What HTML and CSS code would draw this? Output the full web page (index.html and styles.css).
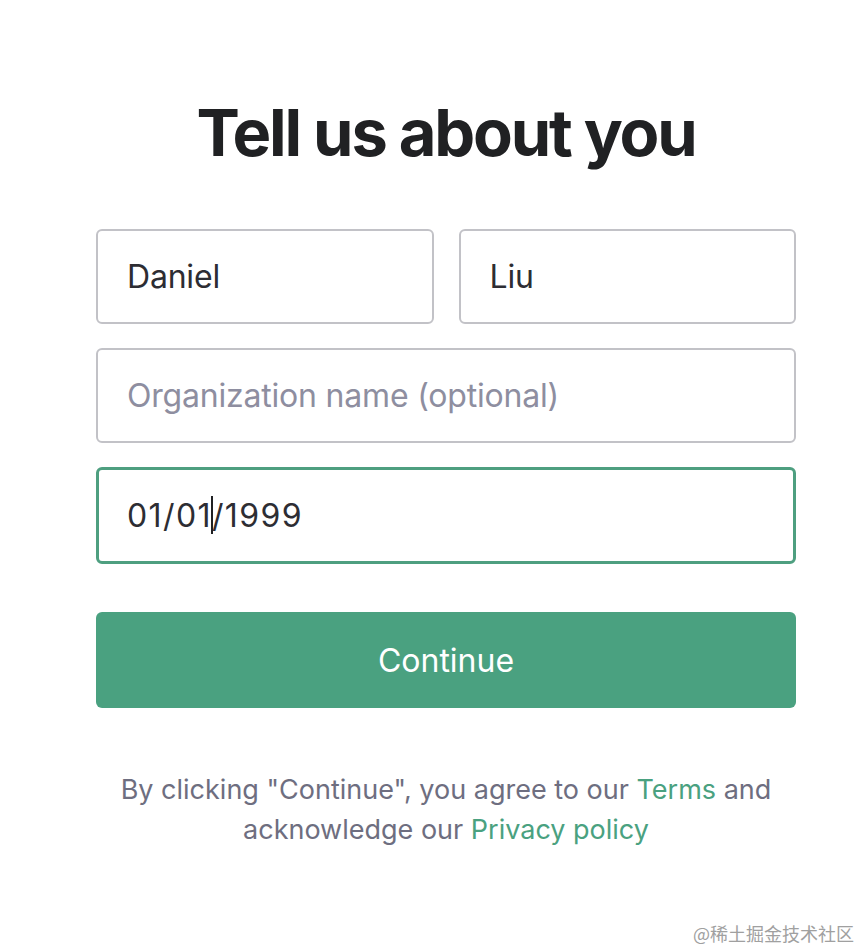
FILE: index.html
```html
<!DOCTYPE html>
<html>
<head>
<meta charset="utf-8">
<link rel="stylesheet" href="styles.css">
</head>
<body>
<main class="page">
  <h1 class="title">Tell us about you</h1>
  <form class="form">
    <div class="row">
      <div class="field"><span class="value">Daniel</span></div>
      <div class="field"><span class="value">Liu</span></div>
    </div>
    <div class="field"><span class="placeholder">Organization name (optional)</span></div>
    <div class="field focused"><span class="value date">01/01<span class="caret"></span>/1999</span></div>
    <div class="button">Continue</div>
  </form>
  <p class="legal">By clicking "Continue", you agree to our <a class="link">Terms</a> and acknowledge our <a class="link">Privacy policy</a></p>
</main>
<div class="watermark">@稀土掘金技术社区</div>
</body>
</html>
```
FILE: styles.css
```css
html, body {
  margin: 0;
  padding: 0;
  background: #ffffff;
}
body {
  width: 862px;
  height: 952px;
  position: relative;
  overflow: hidden;
  font-family: Inter, "Noto Sans", sans-serif;
}
.page {
  margin-left: 96px;
  width: 700px;
  padding-top: 91px;
}
.title {
  margin: 0;
  text-align: center;
  font-size: 65px;
  font-weight: 700;
  color: #202123;
  line-height: 82px;
  letter-spacing: -2.2px;
  position: relative;
  top: 1px;
}
.form {
  margin-top: 56px;
  display: flex;
  flex-direction: column;
  gap: 24px;
}
.row {
  display: flex;
  gap: 25px;
}
.row .field {
  flex: 1;
}
.field {
  box-sizing: border-box;
  height: 95px;
  border: 2px solid #c2c2c7;
  border-radius: 6px;
  padding-left: 29px;
  display: flex;
  align-items: center;
  font-size: 32px;
  letter-spacing: -0.2px;
}
.value {
  color: #2d2d33;
}
.date {
  letter-spacing: 1.4px;
}
.placeholder {
  color: #8e8ea0;
}
.focused {
  border: 3px solid #4e9f80;
  padding-left: 28px;
  height: 97px;
}
.caret {
  display: inline-block;
  width: 1.5px;
  height: 38px;
  background: #202123;
  vertical-align: -7px;
  margin: 0 -0.75px;
}
.button {
  margin-top: 24px;
  height: 96px;
  border-radius: 6px;
  background: #4aa180;
  color: #ffffff;
  font-size: 32px;
  font-weight: 400;
  display: flex;
  align-items: center;
  justify-content: center;
}
.legal {
  margin: 62px 0 0;
  text-align: center;
  font-size: 27px;
  line-height: 40px;
  color: #6e6e80;
  padding: 0 10px;
}
.link {
  color: #4aa180;
  text-decoration: none;
}
.watermark {
  position: absolute;
  right: 8px;
  bottom: 6px;
  font-family: "Noto Sans CJK SC", sans-serif;
  font-size: 18px;
  color: #a0a0a0;
}
```
